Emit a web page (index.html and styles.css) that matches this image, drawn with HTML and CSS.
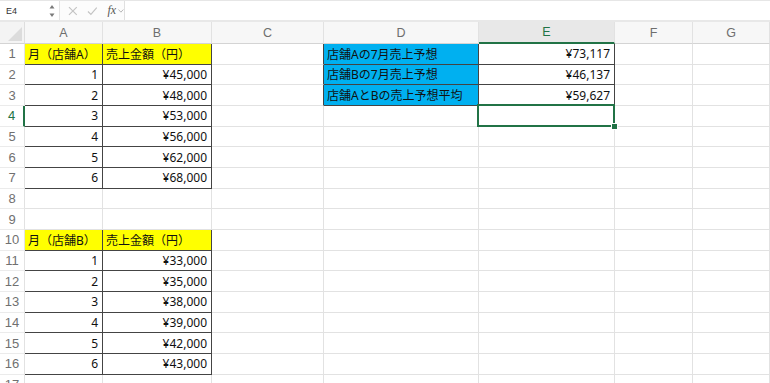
FILE: index.html
```html
<!DOCTYPE html>
<html lang="ja">
<head>
<meta charset="utf-8">
<link rel="stylesheet" href="styles.css">
</head>
<body>
<div class="app">
  <div class="fbar">
    <div class="namebox">
      <span class="nb-text">E4</span>
      <svg class="spin" width="6" height="14" viewBox="0 0 6 14"><path d="M3 1 L5.5 4.5 H0.5 Z" fill="#7a7a7a"/><path d="M3 13 L5.5 9.5 H0.5 Z" fill="#7a7a7a"/></svg>
    </div>
    <div class="fbtns">
      <svg class="ic" width="10" height="10" viewBox="0 0 10 10"><path d="M1 1 L9 9 M9 1 L1 9" stroke="#c4c4c4" stroke-width="1.2" fill="none"/></svg>
      <svg class="ic" width="11" height="10" viewBox="0 0 11 10"><path d="M1 5.5 L4 8.5 L10 1.5" stroke="#c4c4c4" stroke-width="1.2" fill="none"/></svg>
      <span class="fx">fx</span>
      <svg class="chev" width="6" height="4" viewBox="0 0 6 4"><path d="M0.5 0.5 L3 3.2 L5.5 0.5" stroke="#b5b5b5" stroke-width="1" fill="none"/></svg>
    </div>
    <div class="finput"></div>
  </div>
  <div class="sheet">
    <div class="corner"><svg width="14" height="14" viewBox="0 0 14 14"><path d="M14 0 V14 H0 Z" fill="#dcdcdc"/></svg></div>
    <div class="ch">A</div><div class="ch">B</div><div class="ch">C</div><div class="ch">D</div><div class="ch sel">E</div><div class="ch">F</div><div class="ch">G</div>

    <div class="rh">1</div><div class="c y bd">月（店舗A）</div><div class="c y bd">売上金額（円）</div><div class="c bdr"></div><div class="c bl bd">店舗Aの7月売上予想</div><div class="c num bd">¥73,117</div><div class="c"></div><div class="c"></div>
    <div class="rh">2</div><div class="c num bd">1</div><div class="c num bd">¥45,000</div><div class="c bdr"></div><div class="c bl bd">店舗Bの7月売上予想</div><div class="c num bd">¥46,137</div><div class="c"></div><div class="c"></div>
    <div class="rh">3</div><div class="c num bd">2</div><div class="c num bd">¥48,000</div><div class="c bdr"></div><div class="c bl bd">店舗AとBの売上予想平均</div><div class="c num bd">¥59,627</div><div class="c"></div><div class="c"></div>
    <div class="rh sel">4</div><div class="c num bd">3</div><div class="c num bd">¥53,000</div><div class="c"></div><div class="c"></div><div class="c active"></div><div class="c"></div><div class="c"></div>
    <div class="rh">5</div><div class="c num bd">4</div><div class="c num bd">¥56,000</div><div class="c"></div><div class="c"></div><div class="c"></div><div class="c"></div><div class="c"></div>
    <div class="rh">6</div><div class="c num bd">5</div><div class="c num bd">¥62,000</div><div class="c"></div><div class="c"></div><div class="c"></div><div class="c"></div><div class="c"></div>
    <div class="rh">7</div><div class="c num bd">6</div><div class="c num bd">¥68,000</div><div class="c"></div><div class="c"></div><div class="c"></div><div class="c"></div><div class="c"></div>
    <div class="rh">8</div><div class="c"></div><div class="c"></div><div class="c"></div><div class="c"></div><div class="c"></div><div class="c"></div><div class="c"></div>
    <div class="rh">9</div><div class="c"></div><div class="c"></div><div class="c"></div><div class="c"></div><div class="c"></div><div class="c"></div><div class="c"></div>
    <div class="rh">10</div><div class="c y bd">月（店舗B）</div><div class="c y bd">売上金額（円）</div><div class="c"></div><div class="c"></div><div class="c"></div><div class="c"></div><div class="c"></div>
    <div class="rh">11</div><div class="c num bd">1</div><div class="c num bd">¥33,000</div><div class="c"></div><div class="c"></div><div class="c"></div><div class="c"></div><div class="c"></div>
    <div class="rh">12</div><div class="c num bd">2</div><div class="c num bd">¥35,000</div><div class="c"></div><div class="c"></div><div class="c"></div><div class="c"></div><div class="c"></div>
    <div class="rh">13</div><div class="c num bd">3</div><div class="c num bd">¥38,000</div><div class="c"></div><div class="c"></div><div class="c"></div><div class="c"></div><div class="c"></div>
    <div class="rh">14</div><div class="c num bd">4</div><div class="c num bd">¥39,000</div><div class="c"></div><div class="c"></div><div class="c"></div><div class="c"></div><div class="c"></div>
    <div class="rh">15</div><div class="c num bd">5</div><div class="c num bd">¥42,000</div><div class="c"></div><div class="c"></div><div class="c"></div><div class="c"></div><div class="c"></div>
    <div class="rh">16</div><div class="c num bd">6</div><div class="c num bd">¥43,000</div><div class="c"></div><div class="c"></div><div class="c"></div><div class="c"></div><div class="c"></div>
    <div class="rh">17</div><div class="c"></div><div class="c"></div><div class="c"></div><div class="c"></div><div class="c"></div><div class="c"></div><div class="c"></div>
  </div>
</div>
</body>
</html>
```
FILE: styles.css
```css
html, body {
  margin: 0;
  padding: 0;
  background: #ffffff;
  overflow: hidden;
}
.app {
  width: 770px;
  height: 383px;
  overflow: hidden;
  font-family: "Noto Sans", "Noto Sans CJK JP", sans-serif;
}
.fbar {
  height: 19px;
  display: flex;
  align-items: stretch;
  background: #fbfbfb;
  border-top: 1px solid #e6e6e6;
  border-bottom: 2px solid #e8e8e8;
}
.namebox {
  width: 60px;
  display: flex;
  align-items: center;
  justify-content: space-between;
  padding: 0 4px 0 6px;
  box-sizing: border-box;
  background: #ffffff;
  border-right: 1px solid #e4e4e4;
}
.nb-text {
  font-family: "Liberation Sans", Arial, sans-serif;
  font-size: 9px;
  color: #333;
}
.fbtns {
  width: 64px;
  display: flex;
  align-items: center;
  gap: 9px;
  padding-left: 8px;
  box-sizing: border-box;
  background: #fcfcfc;
}
.fx {
  font-family: "Liberation Serif", "Times New Roman", serif;
  font-style: italic;
  font-size: 12px;
  color: #555;
  margin-left: 1px;
  margin-right: -7px;
}
.chev { margin-top: 1px; }
.finput {
  flex: 1;
  background: #ffffff;
  border-left: 1px solid #e0e0e0;
}
.sheet {
  display: grid;
  grid-template-columns: 25px 78px 109px 112px 155px 136px 78px 1fr;
  grid-template-rows: 22px repeat(17, 20.67px);
}
.corner {
  background: #f4f4f4;
  border-right: 1px solid #dedede;
  border-bottom: 1px solid #d4d4d4;
  display: flex;
  align-items: flex-end;
  justify-content: flex-end;
  padding: 0 2px 2px 0;
  box-sizing: border-box;
}
.ch {
  background: #f7f7f7;
  border-right: 1px solid #e2e2e2;
  border-bottom: 1px solid #d4d4d4;
  font-family: "Liberation Sans", Arial, sans-serif;
  font-size: 12.5px;
  color: #6e6e6e;
  display: flex;
  align-items: center;
  justify-content: center;
  box-sizing: border-box;
}
.ch.sel {
  background: #e8e8e8;
  color: #217346;
  border-bottom: 2px solid #217346;
}
.rh {
  border-right: 1px solid #e2e2e2;
  border-bottom: 1px solid #ebebeb;
  font-family: "Liberation Sans", Arial, sans-serif;
  font-size: 13px;
  color: #707070;
  display: flex;
  align-items: center;
  justify-content: center;
  box-sizing: border-box;
  background: #ffffff;
}
.rh.sel {
  color: #217346;
  border-right: 2px solid #217346;
}
.c {
  position: relative;
  border-right: 1px solid #e2e2e2;
  border-bottom: 1px solid #e2e2e2;
  box-sizing: border-box;
  font-size: 12px;
  color: #111;
  display: flex;
  align-items: center;
  padding: 0 3px 0 3px;
  white-space: nowrap;
  overflow: visible;
}
.num {
  justify-content: flex-end;
  padding-right: 4px;
}
.y { background: #ffff00; }
.bl { background: #00b0f0; }
.bd {
  border-right-color: #444;
  border-bottom-color: #444;
}
.bdr { border-right-color: #444; }
.active::after {
  content: "";
  position: absolute;
  left: -2px;
  top: -2px;
  right: -1px;
  bottom: -1px;
  border: 2px solid #217346;
}
.active::before {
  content: "";
  position: absolute;
  right: -4px;
  bottom: -4px;
  width: 5px;
  height: 5px;
  background: #217346;
  border: 1px solid #ffffff;
  z-index: 2;
}
```
